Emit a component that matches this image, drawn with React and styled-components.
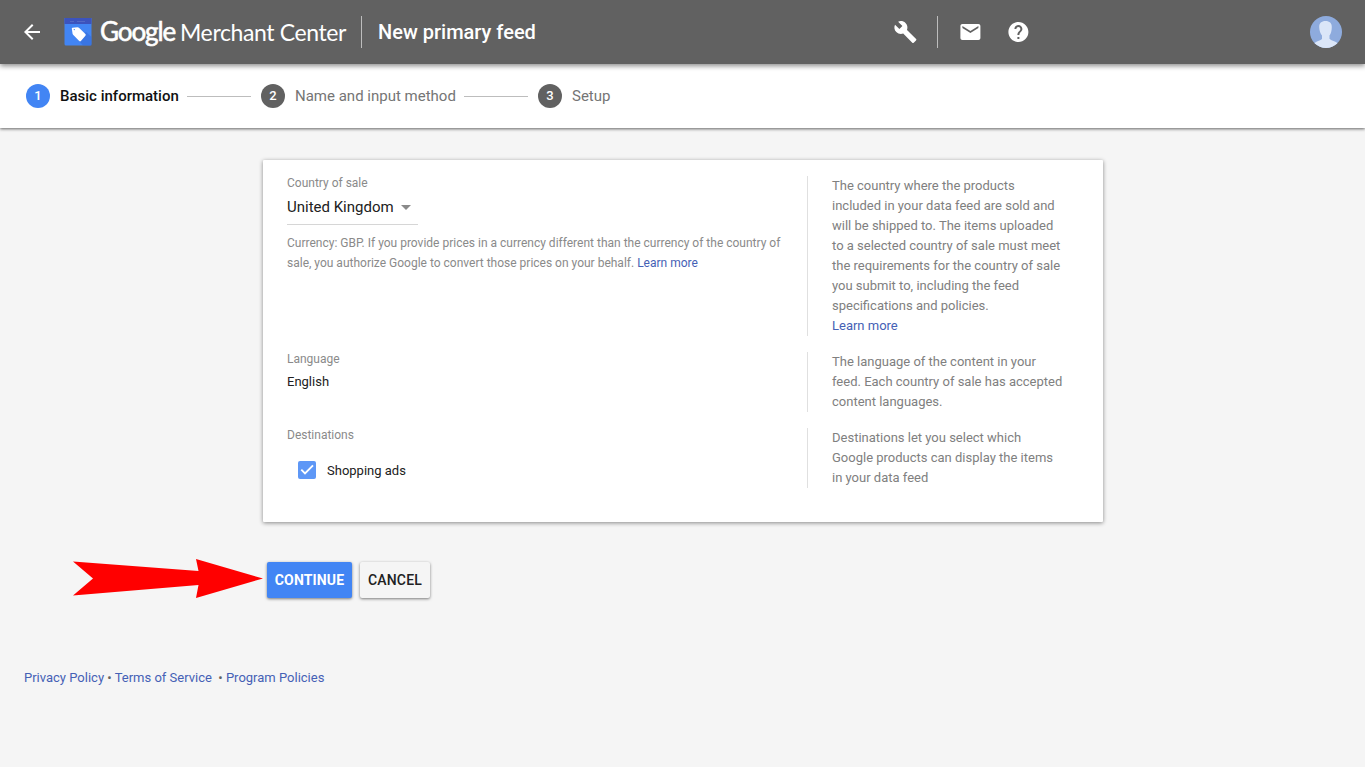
import React from "react";
import styled, { createGlobalStyle } from "styled-components";

const GlobalStyle = createGlobalStyle`
  * { box-sizing: border-box; }
  body {
    margin: 0;
    background: #f5f5f5;
    font-family: Roboto, "Liberation Sans", sans-serif;
    font-size: 13px;
    color: #212121;
  }
`;

const Page = styled.div`
  min-height: 767px;
  display: flex;
  flex-direction: column;
`;

const Header = styled.header`
  position: relative;
  z-index: 2;
  height: 64px;
  display: flex;
  align-items: center;
  padding: 0 23px 0 20px;
  background: #616161;
  color: #fff;
  box-shadow: 0 2px 5px rgba(0, 0, 0, 0.45);
`;

const Icon = styled.svg`
  display: block;
  flex: none;
  width: ${(p) => p.$size || 24}px;
  height: ${(p) => p.$size || 24}px;
  fill: currentColor;
`;

const Brand = styled.div`
  display: flex;
  align-items: center;
  width: 297px;
  margin-left: 20px;
`;

const Wordmark = styled.div`
  display: flex;
  align-items: baseline;
  margin-left: 8px;
  padding-bottom: 2px;
  font-family: Lato, sans-serif;
  line-height: 30px;
  white-space: nowrap;
`;

const BrandName = styled.span`
  width: 80px;
  font-size: 26px;
  letter-spacing: -1.1px;
  -webkit-text-stroke: 0.6px currentColor;
`;

const ProductName = styled.span`
  font-size: 23px;
  letter-spacing: -0.38px;
`;

const Divider = styled.div`
  width: 1px;
  height: 32px;
  background: #bdbdbd;
`;

const Title = styled.h1`
  margin: 0 0 0 16px;
  width: 515px;
  font-size: 20px;
  line-height: 24px;
  font-weight: 500;
`;

const Tools = styled.div`
  display: flex;
  align-items: center;
  flex: 1;
`;

const Gap = styled.div`
  width: ${(p) => p.$w}px;
  flex: none;
`;

const Avatar = styled(Icon)`
  margin-left: auto;
  border-radius: 50%;
`;

const Stepper = styled.nav`
  position: relative;
  z-index: 1;
  height: 64px;
  display: flex;
  align-items: center;
  padding-left: 26px;
  background: #fff;
  box-shadow: 0 1px 3px rgba(0, 0, 0, 0.6);
`;

const StepNumber = styled.span`
  width: 24px;
  height: 24px;
  border-radius: 50%;
  background: ${(p) => (p.$active ? "#4285f4" : "#616161")};
  color: #fff;
  font-size: 13px;
  line-height: 24px;
  font-weight: 500;
  text-align: center;
`;

const StepLabel = styled.span`
  margin-left: 10px;
  width: ${(p) => p.$w}px;
  font-size: 15px;
  line-height: 20px;
  white-space: nowrap;
  font-weight: ${(p) => (p.$active ? 500 : 400)};
  color: ${(p) => (p.$active ? "#111" : "#757575")};
`;

const Connector = styled.span`
  width: 64px;
  height: 1px;
  margin: 1px 10px 0 8px;
  background: #bdbdbd;
`;

const Card = styled.main`
  width: 840px;
  height: 362px;
  margin: 32px 0 0 263px;
  padding: 16px 24px;
  display: flex;
  flex-direction: column;
  gap: 16px;
  background: #fff;
  border-radius: 1px;
  box-shadow: 0 1px 4px rgba(0, 0, 0, 0.45);
`;

const Row = styled.section`
  display: grid;
  grid-template-columns: 520px 1fr;
  height: ${(p) => p.$h}px;
`;

const Field = styled.div`
  display: flex;
  flex-direction: column;
  align-items: flex-start;
`;

const Label = styled.div`
  height: 14px;
  font-size: 12px;
  line-height: 14px;
  color: #8a8a8a;
`;

const Help = styled.div`
  border-left: 1px solid #e0e0e0;
  padding-left: 24px;
  line-height: 20px;
  white-space: nowrap;
  color: #808080;
`;

const Link = styled.a`
  color: #4561b5;
`;

const Select = styled.div`
  width: 131px;
  height: 35px;
  display: flex;
  align-items: center;
  justify-content: space-between;
  padding-right: 7px;
  border-bottom: 1px solid #d6d6d6;
  font-size: 15px;
`;

const Caret = styled.span`
  border: 5px solid transparent;
  border-top-color: #8a8a8a;
  border-bottom: 0;
`;

const Note = styled.p`
  margin: 8px 0 0;
  font-size: 12px;
  line-height: 20px;
  white-space: nowrap;
  color: #8a8a8a;
`;

const Value = styled.div`
  margin-top: 6px;
  line-height: 20px;
`;

const CheckRow = styled.div`
  display: flex;
  align-items: center;
  gap: 11px;
  margin: 19px 0 0 11px;
`;

const Checkbox = styled.span`
  width: 18px;
  height: 18px;
  border-radius: 2px;
  background: #5e97f6;
  color: #fff;
`;

const Actions = styled.div`
  display: flex;
  align-items: center;
  gap: 8px;
  height: 40px;
  margin: 38px 0 0 73px;
`;

const Pointer = styled.svg`
  width: 190px;
  height: 40px;
  margin: -4px -4px 0 0;
`;

const Button = styled.button`
  width: ${(p) => p.$w}px;
  height: 36px;
  border: 0;
  padding: 0;
  border-radius: 2px;
  background: ${(p) => (p.$primary ? "#4285f4" : "#f5f5f5")};
  color: ${(p) => (p.$primary ? "#fff" : "#212121")};
  font: ${(p) => (p.$primary ? 700 : 500)} 14px/36px Roboto, sans-serif;
  letter-spacing: 0.15px;
  box-shadow: 0 1px 3px rgba(0, 0, 0, 0.5);
`;

const Footer = styled.footer`
  margin: 68px 0 0 24px;
  line-height: 20px;
  white-space: pre;
  color: #616161;
`;

export default function App() {
  return (
    <Page>
      <GlobalStyle />
      <Header>
        <Icon viewBox="0 0 24 24">
          <path d="M20 11H7.83l5.59-5.59L12 4l-8 8 8 8 1.41-1.41L7.83 13H20z" />
        </Icon>
        <Brand>
          <Icon $size={28} viewBox="0 0 28 28">
            <path fill="#4285f4" d="M.5 0h27v26q0 1.500-1.500 1.500H2Q.5 27.500.5 26z" />
            <path fill="#3367d6" d="M13 20.500l9-6.500 5.500 5v8.500H19z" opacity=".55" />
            <path fill="#3c53bd" d="M.5 0h27v6H.5z" />
            <path fill="#5368c5" d="M6 3h4v1H6zM13 3h8v1h-8z" />
            <path fill="#fff" d="M8.500 9.700l5-.4q1 0 1.700.6l6.200 6.100q.8.800 0 1.700l-4.500 5.300q-.8.900-1.700 0l-6.100-6.300q-.6-.6-.6-1.500l-.7-4.700q0-.8.700-.8z" />
            <circle fill="#4285f4" cx="10.300" cy="11.600" r=".7" />
          </Icon>
          <Wordmark>
            <BrandName>Google</BrandName>
            <ProductName>Merchant Center</ProductName>
          </Wordmark>
        </Brand>
        <Divider />
        <Title>New primary feed</Title>
        <Tools>
          <Icon viewBox="-.4 0 24 24">
            <path d="M22.700 19l-9.100-9.100c.9-2.300.4-5-1.500-6.900-2-2-5-2.400-7.400-1.300L9 6 6 9 1.600 4.700C.4 7.100.9 10.100 2.900 12.100c1.900 1.900 4.600 2.400 6.900 1.500l9.100 9.100c.4.400 1 .4 1.400 0l2.300-2.300c.5-.4.5-1.100.1-1.400z" />
          </Icon>
          <Gap $w={20} />
          <Divider />
          <Gap $w={20} />
          <Icon viewBox="-.4 0 24 24">
            <path d="M20 4H4c-1.100 0-1.990.9-1.990 2L2 18c0 1.100.9 2 2 2h16c1.100 0 2-.9 2-2V6c0-1.100-.9-2-2-2zm0 4l-8 5-8-5V6l8 5 8-5v2z" />
          </Icon>
          <Gap $w={24} />
          <Icon viewBox="-.4 0 24 24">
            <path d="M12 2C6.480 2 2 6.480 2 12s4.480 10 10 10 10-4.480 10-10S17.520 2 12 2zm1 17h-2v-2h2v2zm2.070-7.750l-.9.920C13.450 12.900 13 13.500 13 15h-2v-.5c0-1.100.45-2.100 1.170-2.830l1.240-1.260c.37-.36.59-.86.59-1.410 0-1.100-.9-2-2-2s-2 .9-2 2H8c0-2.210 1.790-4 4-4s4 1.790 4 4c0 .88-.36 1.680-.93 2.250z" />
          </Icon>
          <Avatar $size={32} viewBox="0 0 32 32">
            <path fill="#8eabdd" d="M0 0h32v32H0z" />
            <path fill="#dbe6f8" d="M15.500 5c-4 0-6.500 2.200-6.300 6.200.1 3.500 1.300 6.500 2.800 8.200v3.300c-1.200 1.800-6 2.400-8.500 5.300V32h25v-4c-2.500-3-7.800-3.500-9-5.300v-3.300c1.500-1.700 2.200-4.700 2.300-8.200C22 7.200 19.500 5 15.500 5z" />
          </Avatar>
        </Tools>
      </Header>
      <Stepper>
        <StepNumber $active>1</StepNumber>
        <StepLabel $active $w={119}>Basic information</StepLabel>
        <Connector />
        <StepNumber>2</StepNumber>
        <StepLabel $w={161}>Name and input method</StepLabel>
        <Connector />
        <StepNumber>3</StepNumber>
        <StepLabel $w={40}>Setup</StepLabel>
      </Stepper>
      <Card>
        <Row $h={160}>
          <Field>
            <Label>Country of sale</Label>
            <Select>United Kingdom<Caret /></Select>
            <Note>
              Currency: GBP. If you provide prices in a currency different than the currency of the country of<br />
              sale, you authorize Google to convert those prices on your behalf. <Link>Learn more</Link>
            </Note>
          </Field>
          <Help>
            The country where the products<br />
            included in your data feed are sold and<br />
            will be shipped to. The items uploaded<br />
            to a selected country of sale must meet<br />
            the requirements for the country of sale<br />
            you submit to, including the feed<br />
            specifications and policies.<br />
            <Link>Learn more</Link>
          </Help>
        </Row>
        <Row $h={60}>
          <Field>
            <Label>Language</Label>
            <Value>English</Value>
          </Field>
          <Help>
            The language of the content in your<br />
            feed. Each country of sale has accepted<br />
            content languages.
          </Help>
        </Row>
        <Row $h={60}>
          <Field>
            <Label>Destinations</Label>
            <CheckRow>
              <Checkbox>
                <Icon $size={18} viewBox="0 0 18 18">
                  <path d="M3.300 8.700L7 12.400l8-8" fill="none" stroke="#fff" strokeWidth="1.900" />
                </Icon>
              </Checkbox>
              Shopping ads
            </CheckRow>
          </Field>
          <Help>
            Destinations let you select which<br />
            Google products can display the items<br />
            in your data feed
          </Help>
        </Row>
      </Card>
      <Actions>
        <Pointer viewBox="0 0 190 40">
          <path fill="#f00" d="M0 3.500L125.500 13 123 1l67 19.500L123 40l2.500-13L0 37.500l20-17z" />
        </Pointer>
        <Button $primary $w={85}>CONTINUE</Button>
        <Button $w={70}>CANCEL</Button>
      </Actions>
      <Footer>
        <Link>Privacy Policy</Link> • <Link>Terms of Service</Link>{"  • "}<Link>Program Policies</Link>
      </Footer>
    </Page>
  );
}
